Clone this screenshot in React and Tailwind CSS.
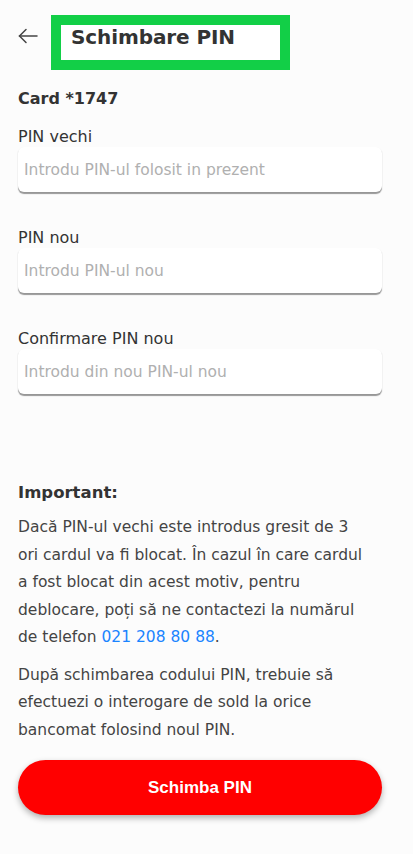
import React, { useState } from "react";

function PinField({ label, placeholder }) {
  const [value, setValue] = useState("");
  return (
    <div className="pb-[36px]">
      <div className="text-[16px] leading-[20px] text-[#333]">{label}</div>
      <div className="rounded-[6px] bg-white shadow-[0_1.5px_1px_rgba(0,0,0,0.4)]">
        <input
          value={value}
          onChange={(e) => setValue(e.target.value)}
          type="password"
          placeholder={placeholder}
          className="h-[45px] w-full bg-transparent px-[6px] text-[15.5px] text-[#333] outline-none placeholder:text-[#b0b0b0]"
        />
      </div>
    </div>
  );
}

export default function App() {
  return (
    <div
      className="min-h-[854px] w-full bg-[#fcfcfc] pl-[18px] pr-[31px] text-[#333]"
      style={{ fontFamily: '"DejaVu Sans", "Noto Sans", sans-serif' }}
    >
      {/* Header */}
      <div className="flex items-start pt-[15px]">
        <button className="mt-[12px] flex h-[18px] w-[22px] items-center text-[#444]">
          <svg width="20" height="16" viewBox="0 0 20 16" fill="none" stroke="currentColor" strokeWidth="1.5" strokeLinecap="round">
            <path d="M19 8H1.5" />
            <path d="M8 1.5L1.5 8 8 14.5" />
          </svg>
        </button>
        <div className="ml-[11px] border-[10px] border-[#12cf47] bg-white">
          <div className="flex h-[35px] w-[219px] items-center pb-[11px] pl-[10px] text-[20px] font-bold tracking-[-0.1px] text-[#333]">
            Schimbare PIN
          </div>
        </div>
      </div>

      <div className="mt-[18px] text-[16px] font-bold leading-[22px] text-[#333]">Card *1747</div>

      <div className="mt-[17px]">
        <PinField label="PIN vechi" placeholder="Introdu PIN-ul folosit in prezent" />
        <PinField label="PIN nou" placeholder="Introdu PIN-ul nou" />
        <PinField label="Confirmare PIN nou" placeholder="Introdu din nou PIN-ul nou" />
      </div>

      <div className="mt-[52px] text-[16.5px] font-bold leading-[22px]">Important:</div>
      <p className="mt-[10px] whitespace-nowrap text-[15.5px] leading-[27.5px] text-[#444]">
        Dacă PIN-ul vechi este introdus gresit de 3
        <br />
        ori cardul va fi blocat. În cazul în care cardul
        <br />
        a fost blocat din acest motiv, pentru
        <br />
        deblocare, poți să ne contactezi la numărul
        <br />
        de telefon <span className="text-[#1a84ff]">021 208 80 88</span>.
      </p>
      <p className="mt-[10px] whitespace-nowrap text-[15.5px] leading-[27.5px] text-[#444]">
        După schimbarea codului PIN, trebuie să
        <br />
        efectuezi o interogare de sold la orice
        <br />
        bancomat folosind noul PIN.
      </p>

      <button
        className="mt-[16px] flex h-[55px] w-full items-center justify-center rounded-full bg-[#ff0000] text-[17px] font-bold text-white shadow-[0_3px_6px_rgba(0,0,0,0.3)]"
        style={{ fontFamily: '"Liberation Sans", Arial, sans-serif' }}
      >
        Schimba PIN
      </button>
    </div>
  );
}
